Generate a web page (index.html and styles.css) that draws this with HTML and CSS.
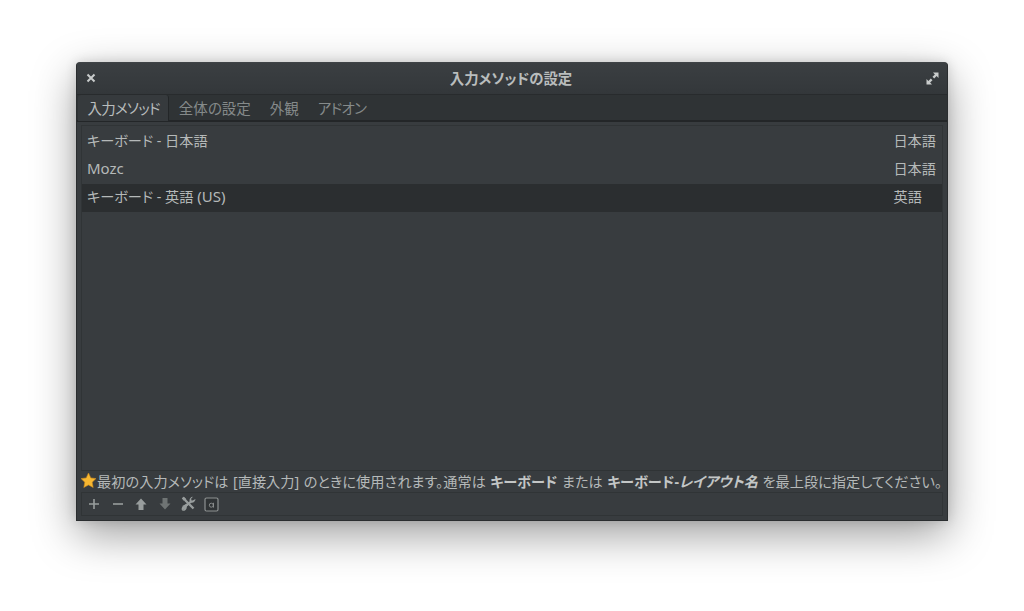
FILE: index.html
```html
<!DOCTYPE html>
<html lang="ja">
<head>
<meta charset="utf-8">
<title>入力メソッドの設定</title>
<link rel="stylesheet" href="styles.css">
</head>
<body>
<div class="window">
  <header class="titlebar">
    <svg class="tb-icon" width="10" height="10" viewBox="0 0 10 10"><path d="M1.5 1.5l7 7M8.5 1.5l-7 7" stroke="#c9cccc" stroke-width="2" fill="none"/></svg>
    <span class="title">入力メソッドの設定</span>
    <svg class="tb-icon" width="13" height="13" viewBox="0 0 13 13"><path d="M7 0.5h5.5V6L10.6 4.1 8.2 6.5 6.5 4.8 8.9 2.4zM0.5 7l1.9 1.9 2.4-2.4 1.7 1.7-2.4 2.4L6 12.5H0.5z" fill="#c9cccc"/></svg>
  </header>
  <nav class="tabs">
    <span class="tab active kana">入力メソッド</span>
    <span class="tab">全体の設定</span>
    <span class="tab">外観</span>
    <span class="tab kana">アドオン</span>
  </nav>
  <main class="content">
    <ul class="list">
      <li class="row"><span>キーボード - 日本語</span><span class="lang">日本語</span></li>
      <li class="row"><span class="latin">Mozc</span><span class="lang">日本語</span></li>
      <li class="row selected"><span>キーボード - 英語 <span class="latin">(US)</span></span><span class="lang short">英語</span></li>
    </ul>
    <p class="hint"><svg class="star" width="17" height="17" viewBox="0 0 17 17"><path d="M8.5 1l2.3 4.9 5.2.7-3.8 3.6 1 5.3-4.700-2.600-4.700 2.600 1-5.300L1 6.600l5.200-.7z" fill="#f7b731" stroke="#c98a1e" stroke-width=".6"/></svg><span>最初の入力メソッドは [直接入力] のときに使用されます。通常は <b>キーボード</b> または <b>キーボード-<i>レイアウト名</i></b> を最上段に指定してください。</span></p>
    <div class="toolbar">
      <svg class="tool" width="14" height="14" viewBox="0 0 14 14"><path d="M7 2v10M2 7h10" stroke="#989d9d" stroke-width="1.600"/></svg>
      <svg class="tool" width="14" height="14" viewBox="0 0 14 14"><path d="M2 7h10" stroke="#989d9d" stroke-width="1.600"/></svg>
      <svg class="tool" width="14" height="14" viewBox="0 0 14 14"><path d="M7 1.500l5.500 6H9.500V13h-5V7.500H1.500z" fill="#989d9d"/></svg>
      <svg class="tool" width="14" height="14" viewBox="0 0 14 14"><path d="M7 12.500l5.500-6H9.500V1h-5v5.500H1.500z" fill="#6f7474"/></svg>
      <svg class="tool" width="15" height="16" viewBox="0 0 15 16"><path d="M2 1.500l2.500 2.500M4 4l8.500 8.500" stroke="#989d9d" stroke-width="2.400" fill="none"/><path d="M.8 2.500L2.500.8 5 3 3 5z" fill="#989d9d"/><path d="M14.500 3.100a3.500 3.500 0 0 1-4.700 3.300L5.700 10.600a3.500 3.500 0 0 1-4.600 4l2.100-2.100-.6-1.800-1.800-.5" fill="#989d9d"/><path d="M14.500 3.100l-2 2-1.900-.5-.5-1.900L12 .7A3.500 3.500 0 0 0 8.700 5.300L1.100 11.200l-.1.200A3.500 3.500 0 0 0 1.100 14.600z" fill="#989d9d"/></svg>
      <svg class="tool key" width="15" height="15" viewBox="0 0 15 15"><rect x="1" y="1" width="13" height="13" rx="1.500" fill="#2f3335" stroke="#8e9292" stroke-width="1.200"/><circle cx="7.300" cy="8.200" r="2" fill="none" stroke="#8e9292" stroke-width=".9"/><path d="M9.500 5.800v4.800" stroke="#8e9292" stroke-width=".9"/></svg>
    </div>
  </main>
</div>
</body>
</html>
```

FILE: styles.css
```css
* { box-sizing: border-box; }
html, body { margin: 0; height: 100%; }
body {
  background: #fff;
  padding: 62px 76px 0;
  font-family: "Noto Sans", "Noto Sans CJK JP", sans-serif;
  font-size: 14.2px;
  font-feature-settings: "palt";
  color: #b5b9b9;
  overflow: hidden;
}
.latin { font-size: 15px; }
.window {
  width: 872px;
  height: 459px;
  display: flex;
  flex-direction: column;
  background: #383c3f;
  border: 1px solid #2a2d2f;
  border-top-color: #3f4346;
  border-radius: 4px 4px 0 0;
  box-shadow: 0 14px 44px rgba(0, 0, 0, .38), 0 0 12px rgba(0, 0, 0, .14);
}
.titlebar {
  height: 32px;
  flex: none;
  display: flex;
  align-items: center;
  justify-content: space-between;
  padding: 0 8px 3px 9px;
  background: linear-gradient(#3b3f42, #33373a);
  border-bottom: 1px solid #282b2d;
}
.tb-icon { margin-top: 2px; }
.title { font-weight: 700; font-size: 14.4px; color: #b9bdbd; }
.tabs {
  height: 27px;
  flex: none;
  display: flex;
  background: #2f3335;
  border-bottom: 2px solid #232628;
  padding-left: 1px;
}
.tab { padding: 0 9.5px; line-height: 26px; color: #858a8a; font-size: 14.5px; }
.tab.kana { letter-spacing: -.7px; }
.tab.active {
  color: #b9bdbd;
  background: #363a3d;
  border-right: 1px solid #232628;
  border-radius: 3px 3px 0 0;
  padding-right: 8.5px;
  margin-bottom: -1px;
}
.content {
  flex: 1;
  min-height: 0;
  display: flex;
  flex-direction: column;
  padding: 3px 4px 4px;
}
.list {
  flex: 1;
  margin: 0;
  padding: 2px 0 0;
  list-style: none;
  background: #383c3f;
  border: 1px solid #303436;
  border-bottom-color: #2f3335;
}
.row {
  height: 28px;
  display: flex;
  align-items: center;
  justify-content: space-between;
  padding: 0 6px 4px 5px;
}
.row.selected { background: #2b2e30; }
.lang.short { margin-right: 14px; }
.hint {
  margin: 0 0 0 -1px;
  height: 21px;
  padding-bottom: 2px;
  display: flex;
  align-items: center;
  white-space: nowrap;
  color: #b5b9b9;
  font-size: 14.2px;
  word-spacing: .7px;
  letter-spacing: .04px;
}
.hint b { color: #c3c6c6; }
.star { flex: none; }
.toolbar {
  height: 24px;
  flex: none;
  display: flex;
  align-items: center;
  gap: 9.5px;
  padding: 0 5px;
  background: #383c3f;
  border: 1px solid #303436;
}
.tool { flex: none; }
.tool.key { margin-left: -2px; }
```
